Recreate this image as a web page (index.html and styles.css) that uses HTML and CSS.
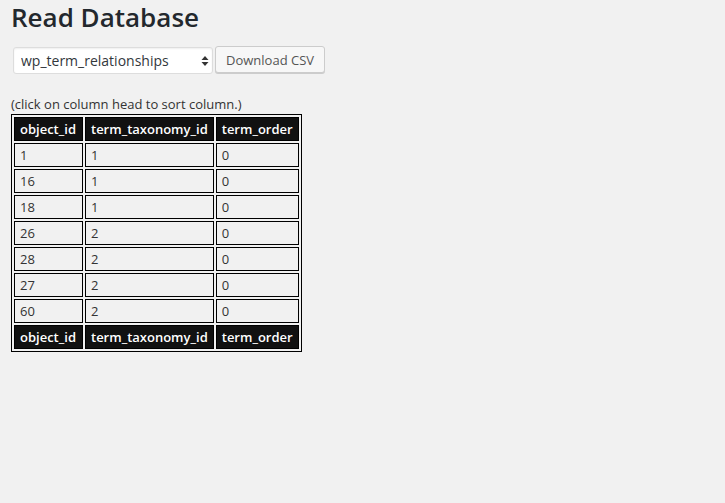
FILE: index.html
```html
<!DOCTYPE html>
<html lang="en">
<head>
<meta charset="utf-8">
<title>Read Database</title>
<link rel="stylesheet" href="styles.css">
</head>
<body>
<div class="wrap">
  <h1 class="title">Read Database</h1>
  <form class="controls">
    <div class="select-wrap">
      <select class="table-select">
        <option>wp_term_relationships</option>
      </select>
      <svg class="select-arrows" width="8" height="12" viewBox="0 0 8 12" aria-hidden="true">
        <path d="M4 1 L7.5 5 L0.5 5 Z" fill="#333"/>
        <path d="M4 11 L7.5 7 L0.5 7 Z" fill="#333"/>
      </svg>
    </div>
    <button type="button" class="button">Download CSV</button>
  </form>
  <p class="hint">(click on column head to sort column.)</p>
  <table class="data">
    <thead>
      <tr><th class="col-first">object_id</th><th>term_taxonomy_id</th><th>term_order</th></tr>
    </thead>
    <tbody>
      <tr><td>1</td><td>1</td><td>0</td></tr>
      <tr><td>16</td><td>1</td><td>0</td></tr>
      <tr><td>18</td><td>1</td><td>0</td></tr>
      <tr><td>26</td><td>2</td><td>0</td></tr>
      <tr><td>28</td><td>2</td><td>0</td></tr>
      <tr><td>27</td><td>2</td><td>0</td></tr>
      <tr><td>60</td><td>2</td><td>0</td></tr>
    </tbody>
    <tfoot>
      <tr><th class="col-first">object_id</th><th>term_taxonomy_id</th><th>term_order</th></tr>
    </tfoot>
  </table>
</div>
</body>
</html>
```
FILE: styles.css
```css
html, body {
  margin: 0;
  padding: 0;
  background: #f1f1f1;
}
body {
  font-family: "Open Sans", "Noto Sans", sans-serif;
  font-size: 13px;
  line-height: 1.4em;
  color: #444;
}
.wrap {
  padding: 0 10px;
}
.title {
  margin: 0 0 0 1px;
  font-size: 26px;
  line-height: 34px;
  font-weight: 600;
  color: #23282d;
}
.controls {
  display: flex;
  align-items: flex-start;
  gap: 2px;
  margin-top: 12px;
  padding-left: 3px;
}
.select-wrap {
  position: relative;
  margin-top: 1px;
}
.table-select {
  appearance: none;
  -webkit-appearance: none;
  box-sizing: border-box;
  width: 200px;
  height: 27px;
  margin: 0;
  padding: 0 20px 0 7px;
  border: 1px solid #ddd;
  border-radius: 3px;
  background: #fff;
  box-shadow: inset 0 1px 2px rgba(0,0,0,.07);
  font-family: "Open Sans", "Noto Sans", sans-serif;
  font-size: 14px;
  color: #32373c;
}
.select-arrows {
  position: absolute;
  right: 4px;
  top: 8px;
  pointer-events: none;
}
.button {
  box-sizing: border-box;
  height: 27px;
  margin: 0;
  padding: 0 10px 1px;
  border: 1px solid #ccc;
  border-radius: 3px;
  background: #f7f7f7;
  box-shadow: 0 1px 0 #ccc;
  font-family: "Open Sans", "Noto Sans", sans-serif;
  font-size: 13px;
  line-height: 26px;
  color: #555;
}
.hint {
  margin: 21px 0 0 1px;
  line-height: 18px;
  color: #333;
}
.data {
  margin: 1px 0 0 1px;
  border: 1px solid #000;
  border-spacing: 2px;
}
.data th,
.data td {
  border: 1px solid #000;
  padding: 2px 5px;
  line-height: 18px;
  text-align: left;
  font-size: 13px;
}
.data th {
  background: #111;
  color: #fff;
  font-weight: 600;
}
.data th.col-first {
  padding-right: 6px;
}
.data td {
  color: #333;
}
```
